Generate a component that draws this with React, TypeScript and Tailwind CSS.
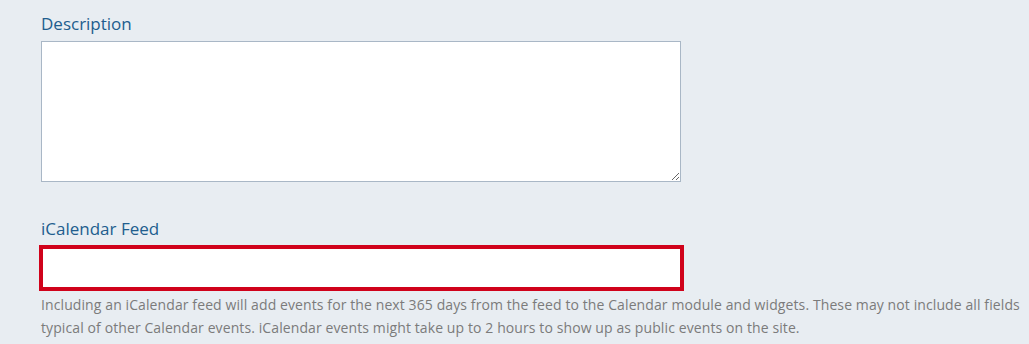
export default function App() {
  return (
    <div className="min-h-[344px] w-full bg-[#e8edf2] font-['Open_Sans','Lato',sans-serif]">
      <div className="pl-[41px] pt-[12px]">
        <label className="block text-[17px] leading-[24px] text-[#215d8e]">
          Description
        </label>
        <textarea className="mt-[5px] block h-[141px] w-[640px] border border-[#a9b7c6] bg-white outline-none" />

        <label className="mt-[35px] block text-[17px] leading-[24px] text-[#215d8e]">
          iCalendar Feed
        </label>
        <input
          type="text"
          className="mt-[4px] -ml-[2px] block h-[46px] w-[645px] border-4 border-[#d0021b] bg-white outline-none"
        />
        <p className="mt-[2px] pr-[3px] text-[14px] leading-[23px] tracking-[0.1px] text-[#7b7b7b]">
          Including an iCalendar feed will add events for the next 365 days from the feed to the Calendar module and widgets. These may not include all fields typical of other Calendar events. iCalendar events might take up to 2 hours to show up as public events on the site.
        </p>
      </div>
    </div>
  );
}
